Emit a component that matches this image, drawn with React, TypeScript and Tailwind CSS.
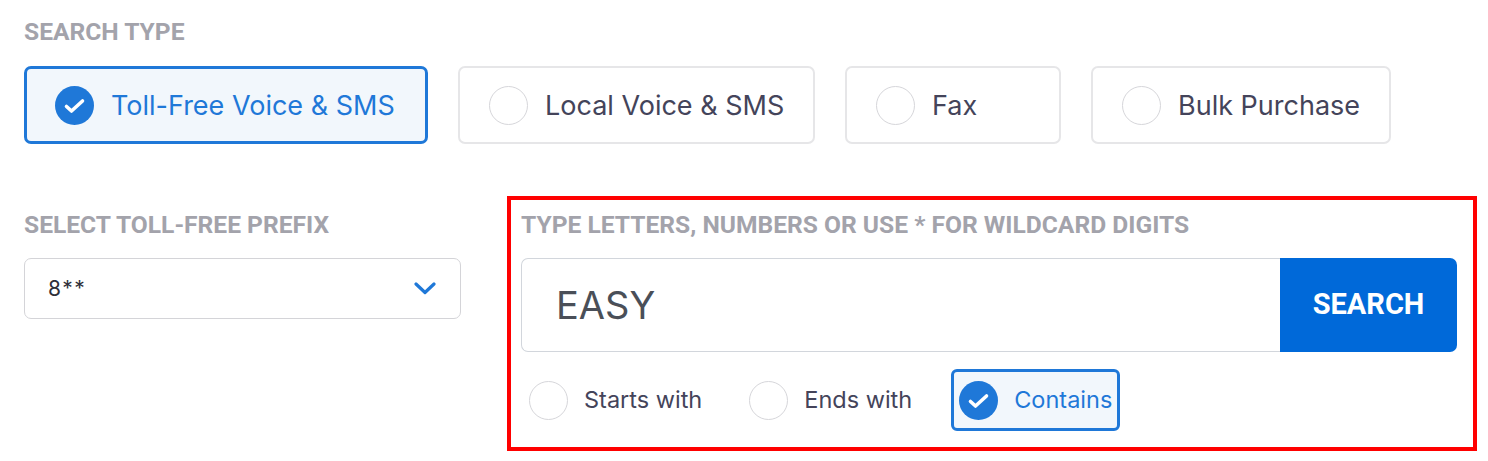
import { useState } from "react";

const searchTypes = ["Toll-Free Voice & SMS", "Local Voice & SMS", "Fax", "Bulk Purchase"];
const typeWidths: Record<string, string> = {
  "Toll-Free Voice & SMS": "w-[404px]",
  "Local Voice & SMS": "w-[357px]",
  Fax: "w-[216px]",
  "Bulk Purchase": "w-[300px]",
};
const matchModes = ["Starts with", "Ends with", "Contains"];

function RadioDot({ checked }: { checked: boolean }) {
  if (!checked) {
    return <span className="w-[39px] h-[39px] rounded-full border border-[#d6d6da] bg-white shrink-0" />;
  }
  return (
    <svg width="39" height="39" viewBox="0 0 39 39" className="shrink-0">
      <circle cx="19.5" cy="19.5" r="19.5" fill="#1f78d8" />
      <polyline
        points="11.5,20.5 16.5,25 27.5,15"
        fill="none"
        stroke="#fff"
        strokeWidth="3.6"
        strokeLinecap="round"
        strokeLinejoin="round"
      />
    </svg>
  );
}

export default function App() {
  const [type, setType] = useState("Toll-Free Voice & SMS");
  const [mode, setMode] = useState("Contains");

  return (
    <div className="w-[1488px] h-[461px] bg-white overflow-hidden pl-[24px] pt-[19px] font-['Inter',sans-serif]">
      {/* Search type */}
      <p className="font-['Roboto',sans-serif] font-bold text-[24.6px] leading-[25px] text-[#a3a3ab] uppercase">
        Search Type
      </p>
      <div className="flex gap-[30px] mt-[22px]">
        {searchTypes.map((t) => {
          const active = t === type;
          return (
            <button
              key={t}
              onClick={() => setType(t)}
              className={`${typeWidths[t]} h-[78px] rounded-[7px] flex items-center gap-[17px] ${
                active
                  ? "border-[3px] border-[#1f78d8] bg-[#f2f7fc] pl-[28px] text-[#1f78d8]"
                  : "border-2 border-[#e6e6e8] bg-white pl-[29px] text-[#44445a]"
              }`}
            >
              <RadioDot checked={active} />
              <span className="text-[27px] leading-none whitespace-nowrap">{t}</span>
            </button>
          );
        })}
      </div>

      <div className="flex mt-[52px] gap-[46px]">
        {/* Prefix */}
        <div className="w-[437px] pt-[16px]">
          <p className="font-['Roboto',sans-serif] font-bold text-[24.6px] leading-[25px] text-[#a3a3ab] uppercase whitespace-nowrap">
            Select Toll-Free Prefix
          </p>
          <div className="mt-[21px] h-[61px] rounded-[7px] border border-[#d4d4d8] flex items-center justify-between pl-[23px] pr-[24px]">
            <span className="text-[21px] text-[#2f2f3a] tracking-[1.5px]">8**</span>
            <svg width="22" height="13" viewBox="0 0 22 13">
              <polyline
                points="2,2 11,10.5 20,2"
                fill="none"
                stroke="#1f78d8"
                strokeWidth="3.2"
                strokeLinecap="round"
                strokeLinejoin="round"
              />
            </svg>
          </div>
        </div>

        {/* Vanity search */}
        <div className="w-[970px] border-4 border-[#ff0000] pl-[10px] pr-[16px] pt-[12px] pb-[16px]">
          <p className="font-['Roboto',sans-serif] font-bold text-[24.6px] leading-[25px] text-[#a3a3ab] uppercase whitespace-nowrap">
            Type letters, numbers or use * for wildcard digits
          </p>
          <div className="mt-[21px] flex h-[94px]">
            <input
              defaultValue="EASY"
              className="flex-1 min-w-0 border border-r-0 border-[#d2d6dc] rounded-l-[7px] pl-[34px] text-[38px] text-[#4a4f58] outline-none"
            />
            <button className="w-[177px] rounded-r-[7px] bg-[#0069d9] text-white font-['Roboto',sans-serif] font-bold text-[29px]">
              SEARCH
            </button>
          </div>
          <div className="mt-[17px] flex gap-[31px]">
            {matchModes.map((m) => {
              const active = m === mode;
              return (
                <button
                  key={m}
                  onClick={() => setMode(m)}
                  className={`h-[62px] rounded-[6px] border-[3px] px-[5px] flex items-center gap-[16px] ${
                    active ? "border-[#1f78d8] bg-[#f2f7fc] text-[#1f78d8]" : "border-transparent text-[#44445a]"
                  }`}
                >
                  <RadioDot checked={active} />
                  <span className="text-[23.5px] leading-none whitespace-nowrap">{m}</span>
                </button>
              );
            })}
          </div>
        </div>
      </div>
    </div>
  );
}
